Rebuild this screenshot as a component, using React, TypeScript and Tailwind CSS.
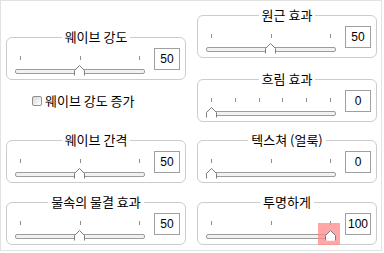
import React from "react";

const FONT = { fontFamily: '"Noto Sans CJK KR", "Liberation Sans", sans-serif' };

function Thumb() {
  return (
    <svg width="11" height="11" viewBox="0 0 11 11" className="block">
      <path d="M0.5 10.5 V5.5 L5.5 0.5 L10.5 5.5 V10.5" fill="#ffffff" stroke="#7d7d7d" strokeWidth="1" />
      <path d="M1.5 10.5 V6 L5.5 2 L9.5 6 V10.5 Z" fill="#ffffff" />
    </svg>
  );
}

function Group({
  title,
  value,
  ticks = 3,
  highlight = false,
}: {
  title: string;
  value: number;
  ticks?: number;
  highlight?: boolean;
}) {
  const center = 5 + (value / 100) * 119;
  return (
    <div className="relative h-[43px] w-[180px] border border-[#cccccc] rounded-[6px] flex items-start">
      <div className="absolute left-0 right-0 top-[-9px] flex justify-center">
        <span className="bg-white px-[3px] text-[13px] leading-[16px] text-black">{title}</span>
      </div>
      <div className="relative ml-[8px] w-[130px] flex flex-col pt-[18px]">
        <div className="flex justify-between px-[5px] h-[4px]">
          {Array.from({ length: ticks }).map((_, i) => (
            <div key={i} className="w-px h-[4px] bg-[#909090]" />
          ))}
        </div>
        <div className="mt-[9px] h-[5px] border border-[#9c9c9c] rounded-[2px] bg-[#f2f2f2]" />
        {highlight && (
          <div
            className="absolute top-[20px] w-[22px] h-[22px] bg-[#ff8a8a]/75"
            style={{ left: center - 12 }}
          />
        )}
        <div className="absolute top-[27px]" style={{ left: center - 5.5 }}>
          <Thumb />
        </div>
      </div>
      <div className="ml-[9px] mt-[10px] w-[26px] h-[22px] border border-[#a0a0a0] flex items-center justify-center text-[12px] text-black leading-none" style={{ fontFamily: '"Liberation Sans", sans-serif' }}>
        {value}
      </div>
    </div>
  );
}

export default function App() {
  return (
    <div className="bg-white w-[384px] h-[253px]" style={FONT}>
      <div className="w-[382px] h-[251px] border border-[#e2e2e2] flex pl-[5px]">
        <div className="flex flex-col w-[180px]">
          <div className="mt-[36px]">
            <Group title="웨이브 강도" value={50} />
          </div>
          <div className="h-[60px] flex items-start pt-[14px] pl-[26px]">
            <div className="mt-[2px] w-[10px] h-[10px] border border-[#8f8f8f] rounded-[2px] bg-gradient-to-br from-[#d8d8d8] to-white" />
            <span className="ml-[3px] text-[13px] leading-[14px] text-black">웨이브 강도 증가</span>
          </div>
          <Group title="웨이브 간격" value={50} />
          <div className="mt-[19px]">
            <Group title="물속의 물결 효과" value={50} />
          </div>
        </div>
        <div className="flex flex-col w-[180px] ml-[11px]">
          <div className="mt-[14px]">
            <Group title="원근 효과" value={50} />
          </div>
          <div className="mt-[21px]">
            <Group title="흐림 효과" value={0} ticks={6} />
          </div>
          <div className="mt-[18px]">
            <Group title="텍스쳐 (얼룩)" value={0} />
          </div>
          <div className="mt-[19px]">
            <Group title="투명하게" value={100} highlight />
          </div>
        </div>
      </div>
    </div>
  );
}
